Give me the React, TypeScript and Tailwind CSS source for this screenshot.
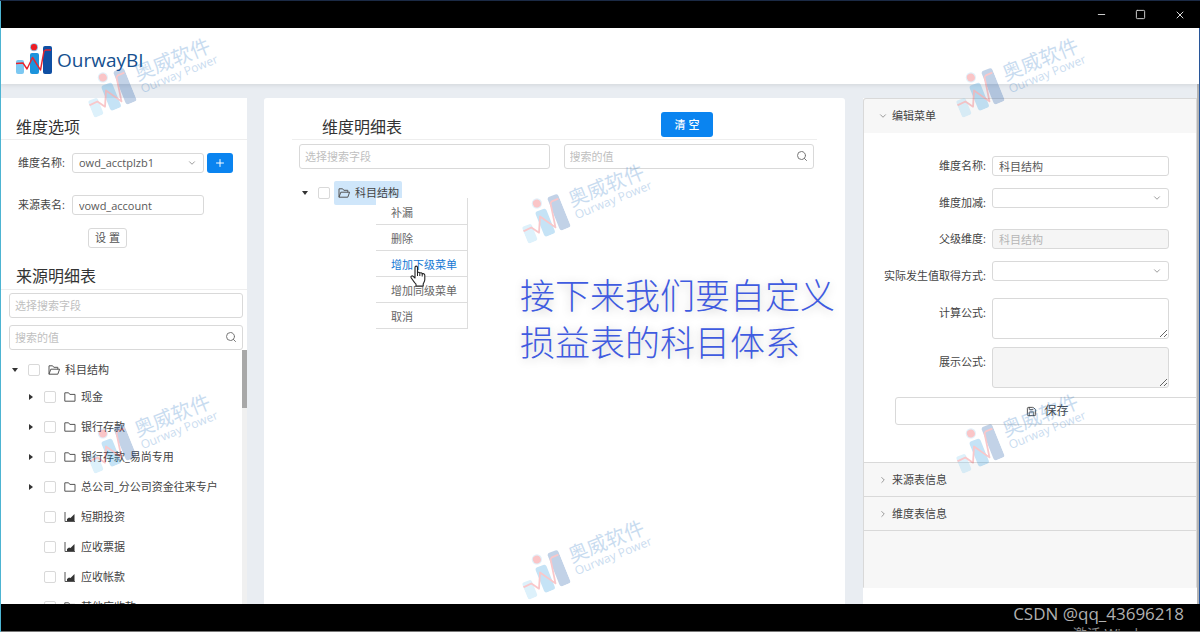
import React from 'react';
import { ChevronDown, ChevronRight, Minus, Plus, Save, Search, Square, X } from 'lucide-react';

const SOURCE_ROWS = [
    { label: '现金', folder: true },
    { label: '银行存款', folder: true },
    { label: '银行存款_易尚专用', folder: true },
    { label: '总公司_分公司资金往来专户', folder: true },
    { label: '短期投资', folder: false },
    { label: '应收票据', folder: false },
    { label: '应收帐款', folder: false },
    { label: '其他应收款', folder: true },
];

const MENU_ITEMS = ['补漏', '删除', '增加下级菜单', '增加同级菜单', '取消'];

const WATERMARKS = [
    'left-[82px] top-[54px]',
    'left-[950px] top-[54px]',
    'left-[516px] top-[180px]',
    'left-[82px] top-[410px]',
    'left-[950px] top-[410px]',
    'left-[516px] top-[536px]',
];

const field = 'w-full rounded-[3px] border border-[#d9d9d9] bg-white text-[11px] text-[#595959] outline-none placeholder:text-[#bfbfbf]';

function Logo({ className }: { className: string }) {
    return (
        <svg viewBox="0 0 36 31" className={className} fill="none" aria-hidden>
            <rect x="0" y="17" width="8" height="14" rx="2" fill="#7cc8f2" />
            <rect x="14" y="10" width="9" height="21" rx="2" fill="#1c93dc" />
            <rect x="27" y="3" width="9" height="28" rx="2" fill="#0f4fa3" />
            <circle cx="18" cy="4.2" r="4" fill="#8fc6ea" />
            <circle cx="18" cy="4.2" r="3.1" fill="#ed1c24" />
            <path d="M0 20.5L7 20l4 6 5.5-11.5L24.5 27 28 8l1.5-1H35" stroke="#e8252f" strokeWidth="1.4" strokeLinejoin="round" />
        </svg>
    );
}

function Watermark({ pos }: { pos: string }) {
    return (
        <div className={`absolute ${pos} flex h-10 w-max -rotate-[22deg] items-center gap-2 opacity-25`}>
            <Logo className="h-10 w-[46px]" />
            <div className="pt-[2px] text-[#2a76c4]">
                <div className="text-[20px] leading-5">奥威软件</div>
                <div className="text-[12px] leading-3">Ourway Power</div>
            </div>
        </div>
    );
}

function Caret({ open }: { open?: boolean }) {
    return (
        <svg viewBox="0 0 6 6" className="size-[6px] shrink-0" fill="#333" aria-hidden>
            <path d={open ? 'M0 1h6L3 5z' : 'M1 0v6l4-3z'} />
        </svg>
    );
}

function FolderIcon({ open }: { open?: boolean }) {
    return (
        <svg viewBox="0 0 12 12" className="size-3 shrink-0" fill="none" stroke="#555" aria-hidden>
            {open ? (
                <path d="M1 10.2V1.8h3.6l1.2 1.5h4v2M1 10.2l1.8-5h8.8l-1.8 5z" />
            ) : (
                <path d="M.8 1.8h3.8L5.8 3.4h5.2v6.8H.8z" />
            )}
        </svg>
    );
}

function ChartIcon() {
    return (
        <svg viewBox="0 0 12 12" className="size-3 shrink-0" aria-hidden>
            <path d="M1 1v9.500h10" fill="none" stroke="#555" />
            <path d="M3 10V8l2-1.500 1.500.5 4-4V10z" fill="#333" />
        </svg>
    );
}

function TreeCheckbox({ label }: { label: string }) {
    return (
        <input
            type="checkbox"
            aria-label={label}
            className="size-3 shrink-0 appearance-none rounded-[2px] border border-[#d9d9d9] bg-white"
        />
    );
}

function SearchBox({ label }: { label: string }) {
    return (
        <div className="relative flex-1">
            <input type="text" aria-label={label} placeholder={label} className={`${field} block h-[25px] px-[5px]`} />
            <Search className="absolute top-[6px] right-[6px] size-3 text-[#777]" strokeWidth={2} />
        </div>
    );
}

function SelectBox({ id, value }: { id: string; value?: string }) {
    return (
        <div className="relative flex-1">
            <select id={id} className={`${field} block h-5 appearance-none px-[6px]`} defaultValue={value ?? ''}>
                <option value={value ?? ''}>{value ?? ''}</option>
            </select>
            <ChevronDown className="pointer-events-none absolute top-[5px] right-[7px] size-[10px] text-[#888]" />
        </div>
    );
}

function SourcePanel() {
    return (
        <aside className="flex w-[247px] shrink-0 flex-col overflow-hidden bg-white">
            <h2 className="h-[42px] shrink-0 border-b border-[#eee] pt-[17px] pl-4 text-[16px] leading-6 text-[#333]">维度选项</h2>
            <div className="mt-[13px] flex h-5 shrink-0 items-center pr-[14px] pl-[18px]">
                <label htmlFor="dim" className="w-[54px] shrink-0 text-[11px]">维度名称:</label>
                <SelectBox id="dim" value="owd_acctplzb1" />
                <button type="button" aria-label="添加" className="ml-[3px] flex h-5 w-[26px] items-center justify-center rounded-[3px] bg-[#0a84f0] text-white">
                    <Plus className="size-3" />
                </button>
            </div>
            <div className="mt-[22px] flex h-5 shrink-0 items-center pr-[43px] pl-[18px]">
                <label htmlFor="src" className="w-[54px] shrink-0 text-[11px]">来源表名:</label>
                <input id="src" type="text" defaultValue="vowd_account" className={`${field} h-5 px-[6px]`} />
            </div>
            <button type="button" className="mt-[13px] ml-[88px] h-5 w-[39px] shrink-0 rounded-[3px] border border-[#d9d9d9] text-[11px] leading-4 text-[#555]">
                设 置
            </button>
            <h2 className="mt-4 h-[26px] shrink-0 border-b border-[#eee] pl-4 text-[16px] leading-6 text-[#333]">来源明细表</h2>
            <div className="flex shrink-0 flex-col gap-[7px] px-1 pt-[3px] pl-[9px]">
                <input type="text" aria-label="选择搜索字段" placeholder="选择搜索字段" className={`${field} h-[25px] px-[5px]`} />
                <div className="flex">
                    <SearchBox label="搜索的值" />
                </div>
            </div>
            <div className="flex min-h-0 flex-1">
                <div className="flex-1 overflow-hidden">
                    <div className="flex h-10 items-center pl-3">
                        <Caret open />
                        <span className="w-[10px]" />
                        <TreeCheckbox label="科目结构" />
                        <span className="ml-2 flex items-center gap-[5px]">
                            <FolderIcon open />
                            科目结构
                        </span>
                    </div>
                    <ul className="-mt-2">
                        {SOURCE_ROWS.map((row) => (
                            <li key={row.label} className="flex h-[30px] items-center pl-7">
                                <span className="w-4">{row.folder && row.label !== '其他应收款' && <Caret />}</span>
                                <TreeCheckbox label={row.label} />
                                <span className="ml-2 flex items-center gap-[5px] whitespace-nowrap">
                                    {row.folder ? <FolderIcon /> : <ChartIcon />}
                                    {row.label}
                                </span>
                            </li>
                        ))}
                    </ul>
                </div>
                <div className="w-[5px] bg-[#f0f0f0]">
                    <div className="h-[58px] bg-[#a8a8a8]" />
                </div>
            </div>
        </aside>
    );
}

function ContextMenu() {
    return (
        <div role="menu" className="absolute top-[17px] left-[42px] w-[92px] border-r border-[#ddd] bg-white pt-px">
            {MENU_ITEMS.map((item) => (
                <button
                    key={item}
                    type="button"
                    role="menuitem"
                    className={`block h-[26px] w-full border-b border-[#ddd] pt-[3px] pl-[15px] text-left ${item === '增加下级菜单' ? 'text-[#1478d4]' : 'text-[#666]'}`}
                >
                    {item}
                </button>
            ))}
            <svg viewBox="0 0 16 22" className="absolute top-[67px] left-[34px] h-[22px] w-4" aria-hidden>
                <path
                    d="M5 13V2.500C5 .6 7.500.6 7.500 2.500V8c.3-1.200 2.200-1 2.300.3C10.300 7.400 12 7.700 12.200 9c.8-.7 2.600-.3 2.600 1.300v4.200c0 2-1.200 3-1.600 4.500v2H6v-1.800C4.600 17.800 3 15.500 1.300 13 .3 11.300 2 10.300 3.200 11.300z"
                    fill="#fff"
                    stroke="#222"
                    strokeWidth="1.100"
                    strokeLinejoin="round"
                />
                <path d="M7.500 8v3M9.800 8.500V11M12.200 9v2.500" stroke="#222" strokeWidth="1" />
            </svg>
        </div>
    );
}

function DetailPanel() {
    return (
        <main className="relative flex min-w-0 flex-1 flex-col rounded-t-[3px] bg-white px-7">
            <div className="flex h-[42px] shrink-0 items-start justify-between border-b border-[#eee] pr-[104px] pl-[30px]">
                <h2 className="pt-[17px] text-[16px] leading-6 text-[#333]">维度明细表</h2>
                <button type="button" className="mt-[14px] h-[25px] w-[52px] rounded-[3px] bg-[#0a84f0] pt-px text-[11px] font-medium text-white">
                    清 空
                </button>
            </div>
            <div className="flex gap-[14px] px-[7px] pr-[3px] pt-1">
                <div className="flex-1">
                    <input type="text" aria-label="选择搜索字段" placeholder="选择搜索字段" className={`${field} block h-[25px] px-[5px]`} />
                </div>
                <SearchBox label="搜索的值" />
            </div>
            <div className="mt-3 flex h-6 items-center pl-[10px]">
                <Caret open />
                <span className="w-[10px]" />
                <TreeCheckbox label="科目结构" />
                <div className="relative ml-1 flex h-6 w-[68px] items-center gap-[5px] rounded-[2px] bg-[#cfe6fa] pl-[4px] whitespace-nowrap">
                    <FolderIcon open />
                    科目结构
                    <ContextMenu />
                </div>
            </div>
            <p className="absolute top-[174px] left-[256px] text-[35px] leading-[47px] font-light whitespace-nowrap text-[#3f5be0] [text-shadow:0_2px_10px_rgba(0,0,0,0.22)]">
                接下来我们要自定义
                <br />
                损益表的科目体系
            </p>
        </main>
    );
}

function FormRow({ id, label, low, children }: { id: string; label: string; low?: boolean; children: React.ReactNode }) {
    return (
        <div className="flex items-start">
            <label htmlFor={id} className={`w-[122px] shrink-0 pr-[6px] text-right leading-5 whitespace-nowrap ${low ? 'pt-[5px]' : ''}`}>
                {label}:
            </label>
            {children}
        </div>
    );
}

function EditPanel() {
    return (
        <section className="ml-px flex w-[334px] shrink-0 flex-col overflow-hidden bg-white pb-4">
            <div className="flex flex-1 flex-col overflow-hidden rounded-tl-[3px] border border-[#d9d9d9] border-b-transparent bg-[#f7f7f7]">
                <button type="button" className="flex h-[34px] shrink-0 items-center gap-1 pl-[14px]">
                    <ChevronDown className="size-[10px] text-[#888]" />
                    编辑菜单
                </button>
                <div className="h-[330px] shrink-0 border-b border-[#d9d9d9] bg-white pt-[23px]">
                    <form className="flex flex-col pr-[27px] pl-[6px]">
                        <FormRow id="name" label="维度名称">
                            <input id="name" type="text" defaultValue="科目结构" className={`${field} h-5 px-[6px]`} />
                        </FormRow>
                        <div className="mt-3">
                            <FormRow id="sign" label="维度加减" low>
                                <SelectBox id="sign" />
                            </FormRow>
                        </div>
                        <div className="mt-4">
                            <FormRow id="parent" label="父级维度">
                                <input id="parent" type="text" disabled defaultValue="科目结构" className={`${field} h-5 bg-[#f5f5f5]! px-[6px] text-[#b5b5b5]!`} />
                            </FormRow>
                        </div>
                        <div className="mt-3">
                            <FormRow id="actual" label="实际发生值取得方式" low>
                                <SelectBox id="actual" />
                            </FormRow>
                        </div>
                        <div className="mt-3">
                            <FormRow id="calc" label="计算公式" low>
                                <textarea id="calc" className={`${field} block h-[41px]`} />
                            </FormRow>
                        </div>
                        <div className="mt-2">
                            <FormRow id="show" label="展示公式" low>
                                <textarea id="show" readOnly className={`${field} block h-[41px] bg-[#f5f5f5]!`} />
                            </FormRow>
                        </div>
                    </form>
                    <button type="button" className="mt-[9px] ml-[31px] flex h-7 w-[305px] items-center justify-center gap-[7px] rounded-[3px] border border-[#d9d9d9] text-[12px]">
                        <Save className="size-[11px]" />
                        保存
                    </button>
                </div>
                {['来源表信息', '维度表信息'].map((title) => (
                    <button key={title} type="button" className="flex h-[34px] shrink-0 items-center gap-1 border-b border-[#d9d9d9] pt-px pl-[14px]">
                        <ChevronRight className="size-[10px] text-[#888]" />
                        {title}
                    </button>
                ))}
            </div>
        </section>
    );
}

export default function App() {
    return (
        <div className="relative flex h-screen flex-col overflow-hidden border-t border-[#1b2a45] bg-black font-['Open_Sans','Noto_Sans_CJK_SC',sans-serif] text-[11px] text-[#444]">
            <div className="flex h-[27px] shrink-0 items-center justify-end gap-7 pr-[14px] text-[#ddd]">
                <button type="button" aria-label="最小化"><Minus className="size-[11px]" /></button>
                <button type="button" aria-label="最大化"><Square className="size-[11px]" /></button>
                <button type="button" aria-label="关闭"><X className="size-3" /></button>
            </div>
            <div className="flex min-h-0 flex-1 flex-col border-r border-r-[#2a5aa0] bg-[#e9edf2]">
                <header className="z-10 flex h-14 shrink-0 items-center gap-[5px] bg-white pt-1 pl-4 shadow-[0_1px_5px_rgba(0,0,0,0.1)]">
                    <Logo className="h-[31px] w-9" />
                    <span className="pt-1 text-[19px] text-[#15508f]">OurwayBI</span>
                </header>
                <div className="flex min-h-0 flex-1">
                    <div className="flex min-w-0 flex-1 gap-[17px] pt-[14px]">
                        <SourcePanel />
                        <DetailPanel />
                        <EditPanel />
                    </div>
                    <div className="w-[2px] bg-[#b5b5b5]" />
                </div>
            </div>
            <footer className="flex h-7 shrink-0 flex-col items-end overflow-hidden border-b border-[#777] pr-4 whitespace-nowrap">
                <span className="text-[17px] leading-5 text-[#b0b0b0]">CSDN @qq_43696218</span>
                <span className="pr-5 text-[14px] leading-5 text-[#888]">激活 Windows</span>
            </footer>
            <div className="absolute inset-y-0 left-0 z-20 w-px bg-[#4db4d2]" />
            <div className="pointer-events-none absolute inset-x-0 -top-px z-20">
                {WATERMARKS.map((pos) => (
                    <Watermark key={pos} pos={pos} />
                ))}
            </div>
        </div>
    );
}
